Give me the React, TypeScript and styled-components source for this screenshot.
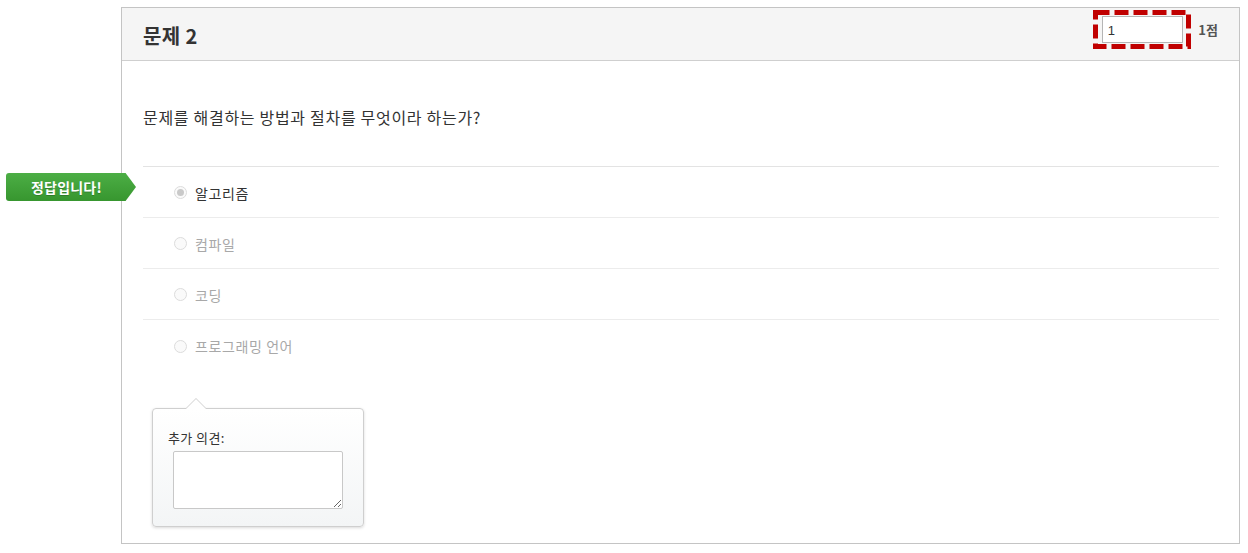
import React from "react";
import styled, { createGlobalStyle } from "styled-components";

const Global = createGlobalStyle`
  html, body { margin: 0; padding: 0; background: #fff; }
  body { font-family: "Noto Sans CJK KR", "Noto Sans", sans-serif; color: #333; }
`;

const Page = styled.div`
  position: relative;
  width: 1248px;
  height: 553px;
  padding: 7px 0 0 121px;
  box-sizing: border-box;
`;

const Panel = styled.div`
  position: relative;
  width: 1119px;
  height: 537px;
  box-sizing: border-box;
  border: 1px solid #c4c4c4;
  display: flex;
  flex-direction: column;
`;

const Header = styled.div`
  height: 53px;
  box-sizing: border-box;
  background: #f5f5f5;
  border-bottom: 1px solid #cfcfcf;
  display: flex;
  align-items: center;
  padding: 0 21px 0 21px;
`;

const Title = styled.h2`
  margin: 0;
  flex: 1;
  font-size: 20px;
  font-weight: 600;
  letter-spacing: 0.4px;
  color: #333;
  line-height: 1;
  padding-top: 4px;
`;

const ScoreBox = styled.div`
  display: flex;
  align-items: center;
  gap: 7px;
  margin-top: -10px;
`;

const Highlight = styled.div`
  position: relative;
  width: 98px;
  height: 39px;
  box-sizing: border-box;
  display: flex;
  align-items: center;
  justify-content: center;
`;

const DashFrame = styled.svg`
  position: absolute;
  inset: 0;
`;

const ScoreInput = styled.input`
  position: relative;
  width: 81px;
  height: 27px;
  box-sizing: border-box;
  border: 1px solid #b5b5b5;
  background: #fff;
  font-family: "Liberation Sans", sans-serif;
  font-size: 13px;
  color: #333;
  padding: 2px 5px 0;
  outline: none;
`;

const ScoreUnit = styled.span`
  font-size: 13px;
  font-weight: 700;
  color: #555;
`;

const Body = styled.div`
  padding: 0 20px 0 21px;
  display: flex;
  flex-direction: column;
`;

const Question = styled.p`
  margin: 0;
  height: 106px;
  display: flex;
  align-items: center;
  padding-top: 6px;
  box-sizing: border-box;
  font-size: 16px;
  letter-spacing: 0.7px;
  color: #333;
  border-bottom: 1px solid #e3e3e3;
`;

const Options = styled.div`
  display: flex;
  flex-direction: column;
`;

const Row = styled.label<{ $last?: boolean; $correct?: boolean }>`
  position: relative;
  height: 51px;
  box-sizing: border-box;
  display: flex;
  align-items: center;
  padding: 1px 0 0 31px;
  border-bottom: ${(p) => (p.$last ? "none" : "1px solid #ececec")};
  font-size: 14px;
  letter-spacing: 0.6px;
  color: ${(p) => (p.$correct ? "#333" : "#a8a8a8")};
`;

const Radio = styled.span<{ $checked?: boolean }>`
  width: 13px;
  height: 13px;
  box-sizing: border-box;
  border-radius: 50%;
  border: 1px solid #dcdcdc;
  background: #fafafa;
  margin-right: 8px;
  display: flex;
  align-items: center;
  justify-content: center;
  &::after {
    content: "";
    width: 7px;
    height: 7px;
    border-radius: 50%;
    background: ${(p) => (p.$checked ? "#c9c9c9" : "transparent")};
  }
`;

const Badge = styled.div`
  position: absolute;
  left: -137px;
  top: 6px;
  width: 130px;
  height: 28px;
  box-sizing: border-box;
  background: linear-gradient(#4cae45, #37962f);
  clip-path: polygon(0 0, 92% 0, 100% 50%, 92% 100%, 0 100%);
  border-radius: 3px 0 0 3px;
  color: #fff;
  font-size: 14px;
  font-weight: 700;
  letter-spacing: 0.2px;
  display: flex;
  align-items: center;
  padding-left: 25px;
  text-shadow: 0 1px 0 rgba(0, 0, 0, 0.2);
`;

const Popover = styled.div`
  position: relative;
  margin: 37px 0 0 9px;
  width: 212px;
  height: 119px;
  box-sizing: border-box;
  border: 1px solid #cfcfcf;
  border-radius: 4px;
  background: linear-gradient(#ffffff, #f3f5f6);
  box-shadow: 0 1px 3px rgba(0, 0, 0, 0.15);
  padding: 21px 0 0 15px;
  &::before,
  &::after {
    content: "";
    position: absolute;
    left: 32px;
    width: 0;
    height: 0;
    border-left: 11px solid transparent;
    border-right: 11px solid transparent;
  }
  &::before {
    top: -11px;
    border-bottom: 11px solid #cfcfcf;
  }
  &::after {
    top: -10px;
    border-bottom: 11px solid #fff;
  }
`;

const PopLabel = styled.div`
  font-size: 13px;
  letter-spacing: 0.4px;
  color: #333;
  line-height: 16px;
  margin-bottom: 5px;
`;

const Comment = styled.textarea`
  display: block;
  margin-left: 5px;
  width: 170px;
  height: 58px;
  box-sizing: border-box;
  border: 1px solid #c8c8c8;
  border-radius: 2px;
  background: #fff;
  resize: both;
  outline: none;
`;

const options = ["알고리즘", "컴파일", "코딩", "프로그래밍 언어"];

export default function App() {
  return (
    <Page>
      <Global />
      <Panel>
        <Header>
          <Title>문제 2</Title>
          <ScoreBox>
            <Highlight>
              <DashFrame width="98" height="39">
                <rect
                  x="2.5"
                  y="2.5"
                  width="93"
                  height="34"
                  fill="none"
                  stroke="#c00000"
                  strokeWidth="5"
                  strokeDasharray="14 5"
                />
              </DashFrame>
              <ScoreInput defaultValue="1" readOnly />
            </Highlight>
            <ScoreUnit>1점</ScoreUnit>
          </ScoreBox>
        </Header>
        <Body>
          <Question>문제를 해결하는 방법과 절차를 무엇이라 하는가?</Question>
          <Options>
            {options.map((o, i) => (
              <Row key={o} $correct={i === 0} $last={i === options.length - 1}>
                {i === 0 && <Badge>정답입니다!</Badge>}
                <Radio $checked={i === 0} />
                {o}
              </Row>
            ))}
          </Options>
          <Popover>
            <PopLabel>추가 의견:</PopLabel>
            <Comment />
          </Popover>
        </Body>
      </Panel>
    </Page>
  );
}
